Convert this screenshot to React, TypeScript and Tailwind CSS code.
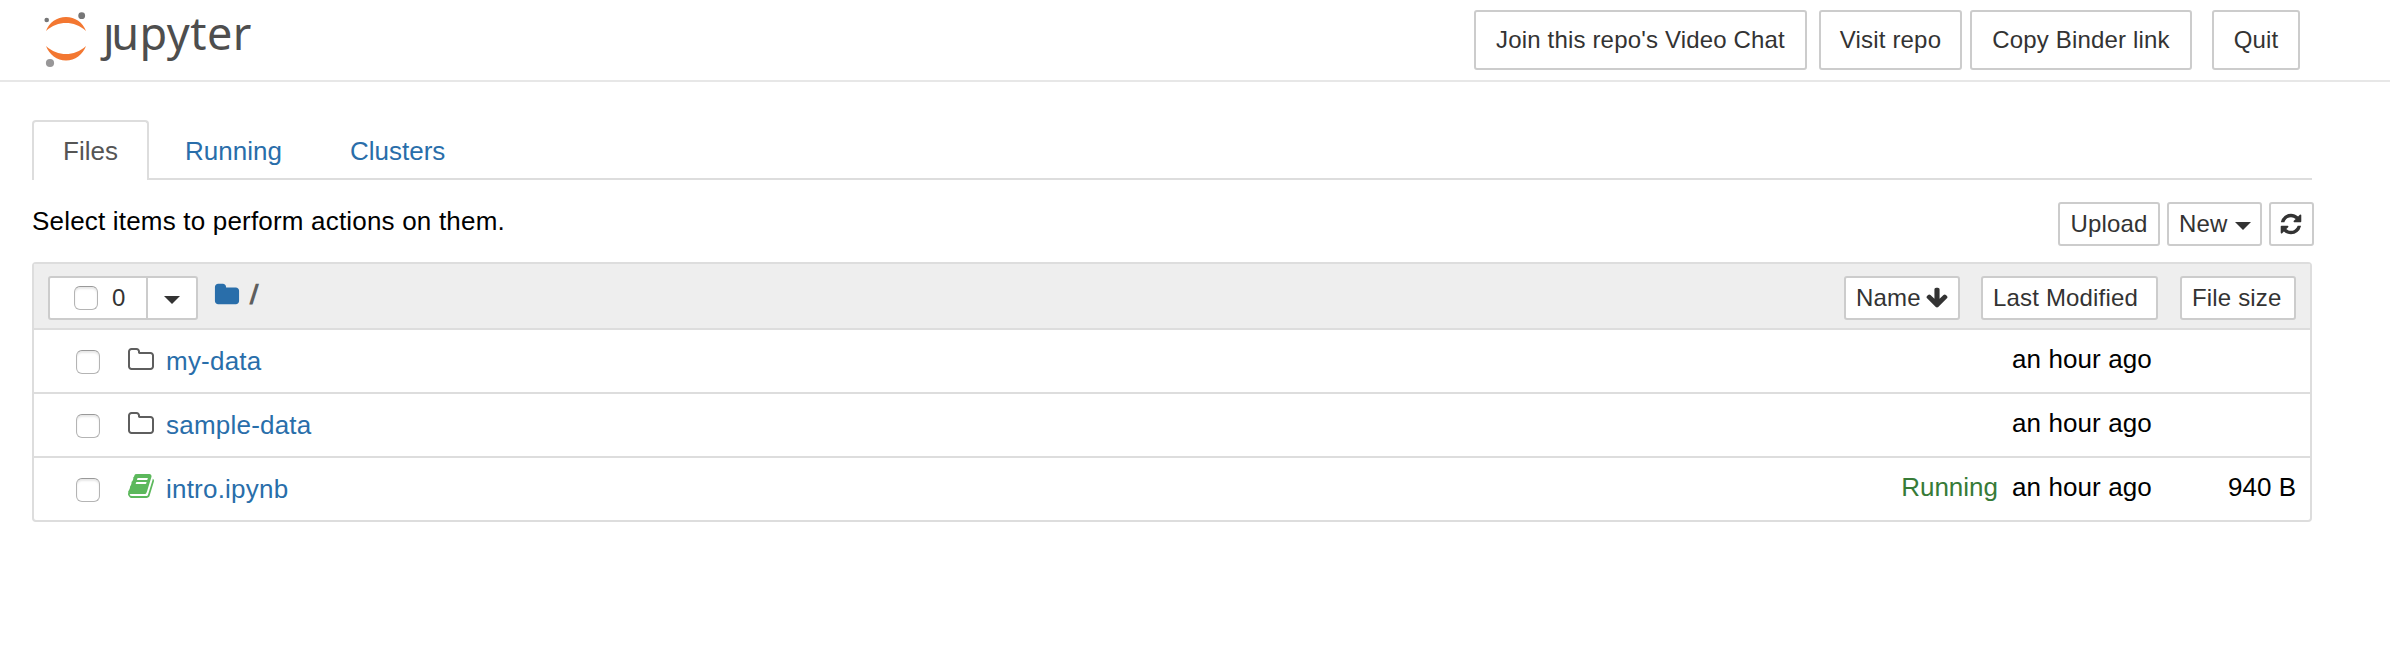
import type { ReactNode } from "react";

const ICONS = {
  refresh:
    "M1639 1056q0 5-1 7-64 268-268 434.5t-478 166.5q-146 0-282.5-55t-243.5-157l-129 129q-19 19-45 19t-45-19-19-45v-448q0-26 19-45t45-19h448q26 0 45 19t19 45-19 45l-137 137q71 66 161 102t187 36q134 0 250-65t186-179q11-17 53-117 8-23 30-23h192q13 0 22.5 9.5t9.5 22.5zm25-800v448q0 26-19 45t-45 19h-448q-26 0-45-19t-19-45 19-45l138-138q-148-137-349-137-134 0-250 65t-186 179q-11 17-53 117-8 23-30 23h-199q-13 0-22.5-9.5t-9.5-22.5v-7q65-268 270-434.5t480-166.5q146 0 284 55.5t245 156.5l130-129q19-19 45-19t45 19 19 45z",
  arrowDown:
    "M1675 832q0 53-37 90l-651 652q-39 37-91 37-53 0-90-37l-651-652q-38-36-38-90 0-53 38-91l74-75q39-37 91-37 53 0 90 37l294 294v-704q0-52 38-90t90-38h128q52 0 90 38t38 90v704l294-294q37-37 90-37 52 0 91 37l75 75q37 39 37 91z",
  folder:
    "M1728 608v704q0 92-66 158t-158 66h-1216q-92 0-158-66t-66-158v-960q0-92 66-158t158-66h320q92 0 158 66t66 158v32h672q92 0 158 66t66 158z",
  folderOpen:
    "M1600 1312v-704q0-40-28-68t-68-28h-704q-40 0-68-28t-28-68v-64q0-40-28-68t-68-28h-320q-40 0-68 28t-28 68v960q0 40 28 68t68 28h1216q40 0 68-28t28-68zm128-704v704q0 92-66 158t-158 66h-1216q-92 0-158-66t-66-158v-960q0-92 66-158t158-66h320q92 0 158 66t66 158v32h672q92 0 158 66t66 158z",
  book: "M1703 478q40 57 18 129l-275 906q-19 64-76.5 107.5t-122.5 43.5h-923q-77 0-148.5-53.5t-99.5-131.5q-24-67-2-127 0-4 3-27t4-37q1-8-3-21.5t-3-19.5q2-11 8-21t16.5-23.5 16.5-23.5q23-38 45-91.5t30-91.5q3-10 .5-30t-.5-28q3-11 17-28t17-23q21-36 42-92t25-90q1-9-2.5-32t.5-28q4-13 22-30.5t22-22.5q19-26 42.5-84.5t27.5-96.5q1-8-3-25.5t-2-26.5q2-8 9-18t18-23 17-21q8-12 16.5-30.5t15-35 16-36 19.5-32 26.5-23.5 36-11.5 47.5 5.5l-1 3q38-9 51-9h761q74 0 114 56t18 130l-274 906q-36 119-71.5 153.5t-128.5 34.5h-869q-27 0-38 15-11 16-1 43 24 70 144 70h923q29 0 56-15.5t35-41.5l300-987q7-22 5-57 38 15 59 43zm-1064 2q-4 13 2 22.5t20 9.5h608q13 0 25.5-9.5t16.5-22.5l21-64q4-13-2-22.5t-20-9.5h-608q-13 0-25.5 9.5t-16.5 22.5zm-83 256q-4 13 2 22.5t20 9.5h608q13 0 25.5-9.5t16.5-22.5l21-64q4-13-2-22.5t-20-9.5h-608q-13 0-25.5 9.5t-16.5 22.5z",
};

function Icon({ name, className }: { name: keyof typeof ICONS; className: string }) {
  return (
    <svg viewBox="0 0 1792 1792" fill="currentColor" className={`shrink-0 ${className}`}>
      <path d={ICONS[name]} />
    </svg>
  );
}

function Caret({ className }: { className: string }) {
  return (
    <svg viewBox="0 0 16 8" fill="currentColor" className={`h-2 w-4 shrink-0 ${className}`}>
      <path d="M0 0h16L8 8z" />
    </svg>
  );
}

function Button({ className, children }: { className: string; children: ReactNode }) {
  return (
    <button
      className={`flex shrink-0 items-center whitespace-nowrap rounded-[3px] border-2 border-[#ccc] bg-white text-[24px] leading-[34px] tracking-[0.17px] text-[#333] ${className}`}
    >
      {children}
    </button>
  );
}

function Checkbox({ className }: { className: string }) {
  return (
    <span
      role="checkbox"
      aria-checked="false"
      className={`size-6 shrink-0 rounded-[6px] border-[1.5px] border-[#b4b4b4] border-t-[#999] bg-white shadow-[inset_0_2px_2px_#e8e8e8] ${className}`}
    />
  );
}

function Logo() {
  return (
    <div className="ml-11 flex h-20 items-start">
      <svg viewBox="0 0 44 58" className="mt-[11px] h-[58px] w-11 shrink-0">
        <path fill="#f37731" d="M2 20C5 11.500 13 6 22 6s17 5.500 20 14C36 14.500 29 12 22 12S8 14.500 2 20z" />
        <path fill="#f37731" d="M2 35C5 43.500 13 49.500 22 49.500s17-6 20-14.500C36 40.500 29 43 22 43S8 40.500 2 35z" />
        <circle cx="37.700" cy="4.700" r="3.400" fill="#767677" />
        <circle cx="2.700" cy="9" r="2.300" fill="#767677" />
        <circle cx="6" cy="52" r="4.100" fill="#989798" />
      </svg>
      <span className="ml-[15px] mt-px font-['Noto_Sans',sans-serif] text-[45px] leading-[64px] text-[#4e4e4e]">
        <span className="tracking-[-3.5px]">ȷ</span>
        <span className="tracking-[0.5px]">upyter</span>
      </span>
    </div>
  );
}

const FILES = [
  { name: "my-data", icon: "folderOpen", running: false, modified: "an hour ago", size: "" },
  { name: "sample-data", icon: "folderOpen", running: false, modified: "an hour ago", size: "" },
  { name: "intro.ipynb", icon: "book", running: true, modified: "an hour ago", size: "940 B" },
] as const;

export default function App() {
  return (
    <div className="min-h-[664px] w-full overflow-hidden bg-white font-['Liberation_Sans',Arial,sans-serif] text-[26px] leading-[36px] text-black">
      <header className="flex h-[82px] items-start justify-between border-b-2 border-[#e7e7e7]">
        <Logo />
        <div className="mr-[90px] mt-[10px] flex">
          <Button className="h-[60px] w-[333px] justify-center">Join this repo's Video Chat</Button>
          <Button className="ml-3 h-[60px] w-[143px] justify-center">Visit repo</Button>
          <Button className="ml-2 h-[60px] w-[222px] justify-center">Copy Binder link</Button>
          <Button className="ml-5 h-[60px] w-[88px] justify-center">Quit</Button>
        </div>
      </header>

      <main className="ml-8 w-[2282px]">
        <nav className="mt-[38px] flex h-[60px] w-[2280px] text-[#296eaa]">
          <div className="flex h-[60px] w-[117px] items-start justify-center rounded-t-[4px] border-2 border-b-0 border-[#ddd] pt-[11px] text-[#555]">
            Files
          </div>
          <div className="flex flex-1 border-b-2 border-[#ddd] pl-9 pt-[13px]">
            <a className="w-[165px]">Running</a>
            <a>Clusters</a>
          </div>
        </nav>

        <div className="flex h-[82px] items-start justify-between pt-[22px]">
          <p className="mt-px tracking-[0.19px]">Select items to perform actions on them.</p>
          <div className="flex">
            <Button className="h-11 w-[102px] justify-center">Upload</Button>
            <Button className="ml-[7px] h-11 w-[95px] pl-[10px]">
              New
              <Caret className="ml-[7px] mt-1" />
            </Button>
            <Button className="ml-[7px] h-11 w-[45px] justify-center pr-px">
              <Icon name="refresh" className="size-6" />
            </Button>
          </div>
        </div>

        <section className="w-[2280px] rounded-[4px] border-2 border-[#ddd]">
          <div className="flex h-16 items-start bg-[#eee] px-[14px] pt-3">
            <div className="flex h-11 w-[150px] rounded-[3px] border-2 border-[#ccc] bg-white text-[24px] text-[#333]">
              <div className="flex w-[98px] items-center border-r-2 border-[#ccc] pl-6">
                <Checkbox className="" />
                <span className="ml-[14px]">0</span>
              </div>
              <div className="flex flex-1 items-center justify-center pt-1">
                <Caret className="" />
              </div>
            </div>
            <Icon name="folder" className="ml-4 mt-[6px] size-[26px] text-[#296eaa]" />
            <span className="ml-[10px] mt-px -skew-x-[7deg] text-[28px] font-bold text-[#5e5e5e]">/</span>
            <div className="ml-auto flex">
              <Button className="h-11 w-[116px] pl-[10px]">
                Name
                <Icon name="arrowDown" className="ml-1 size-6" />
              </Button>
              <Button className="ml-[21px] h-11 w-[177px] pl-[10px]">Last Modified</Button>
              <Button className="ml-[22px] h-11 w-[116px] pl-[10px]">File size</Button>
            </div>
          </div>
          {FILES.map((file) => (
            <div key={file.name} className="flex h-16 items-start border-t-2 border-[#ddd] pr-[14px]">
              <Checkbox className="ml-[42px] mt-5" />
              <Icon
                name={file.icon}
                className={file.icon === "book" ? "ml-[27px] mt-[14px] size-7 text-[#5cb85c]" : "ml-[27px] mt-4 size-7 text-[#5e5e5e]"}
              />
              <a className="ml-[11px] mt-[13px] tracking-[0.22px] text-[#296eaa]">{file.name}</a>
              {file.running && <span className="ml-auto mt-[11px] text-[#377b37]">Running</span>}
              <span
                className={
                  file.running
                    ? "ml-[14px] mt-[11px] w-[141px] whitespace-nowrap tracking-[0.1px]"
                    : "ml-auto mt-[11px] w-[141px] whitespace-nowrap tracking-[0.1px]"
                }
              >
                {file.modified}
              </span>
              <span className="mt-[11px] w-[143px] text-right">{file.size}</span>
            </div>
          ))}
        </section>
      </main>
    </div>
  );
}
